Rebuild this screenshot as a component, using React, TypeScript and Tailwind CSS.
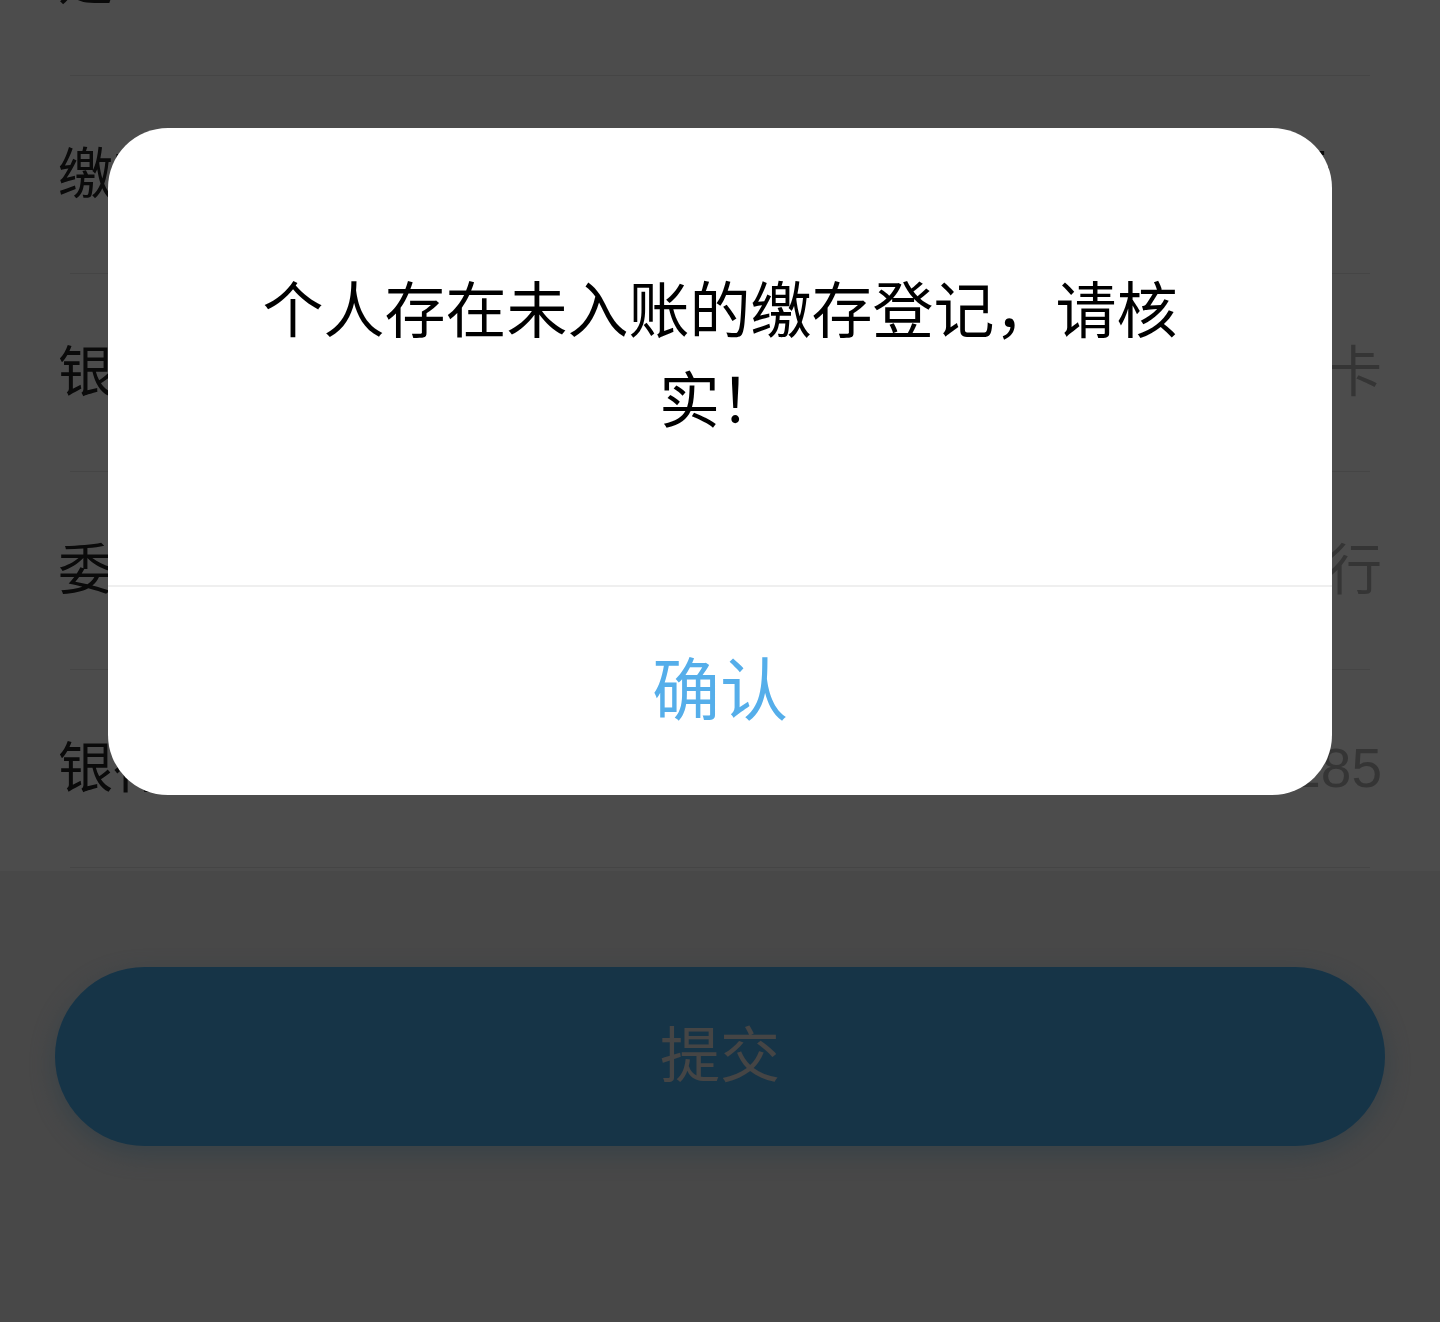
const rows = [
  { label: '是', value: '' },
  { label: '缴存方式', value: '按月缴存元' },
  { label: '银行卡类型', value: '储蓄卡' },
  { label: '委托银行', value: '中国建设银行' },
  { label: '银行卡号', value: '6217 **** **** 1285' },
];

export default function App() {
  return (
    <div className="min-h-[1322px] bg-[#f0f0f0] font-['Liberation_Sans','Noto_Sans_CJK_SC',sans-serif] overflow-hidden">
      {/* 表单列表（顶部已滚出） */}
      <div className="bg-white -mt-[122px] pb-[3px]">
        {rows.map((row, i) => (
          <div key={row.label}>
            <div
              className={
                i === 0
                  ? 'flex h-[197px] items-center justify-between px-[58px] pt-[8px] text-[55px]'
                  : 'flex h-[197px] items-center justify-between px-[58px] text-[55px]'
              }
            >
              <span className="text-[#222]">{row.label}</span>
              <span className={i === 1 ? 'text-[#222] pr-[50px]' : 'text-[#b3b3b3]'}>
                {row.value}
              </span>
            </div>
            <div className="mx-[70px] h-px bg-[#e8e8e8]" />
          </div>
        ))}
      </div>

      {/* 提交按钮 */}
      <div className="px-[55px] pt-[96px]">
        <button
          type="button"
          className="w-full h-[179px] rounded-full bg-[#4aaeef] text-[#e6e6e6] text-[60px] shadow-[0_8px_24px_rgba(74,174,239,0.35)]"
        >
          提交
        </button>
      </div>

      {/* 遮罩 + 弹窗 */}
      <div className="fixed inset-0 bg-[rgba(0,0,0,0.7)] flex justify-center items-start pt-[128px] px-[108px]">
        <div className="w-full bg-white rounded-[60px] overflow-hidden">
          <div className="h-[457px] px-[140px] flex items-center justify-center">
            <p className="text-center text-black text-[61px] leading-[90px]">
              个人存在未入账的缴存登记，请核实！
            </p>
          </div>
          <div className="h-[2px] bg-[#efefef]" />
          <button
            type="button"
            className="w-full h-[208px] flex items-center justify-center text-[68px] text-[#55aeea]"
          >
            确认
          </button>
        </div>
      </div>
    </div>
  );
}
